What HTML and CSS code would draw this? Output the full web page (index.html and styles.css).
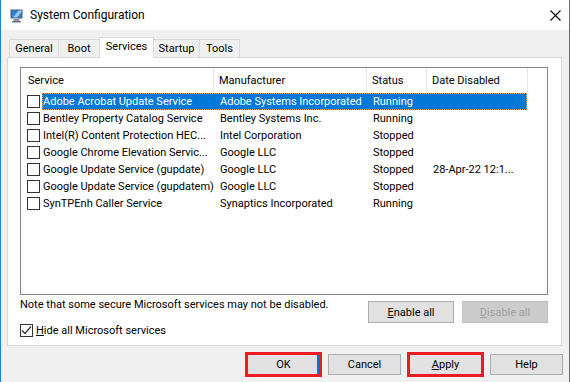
FILE: index.html
```html
<!DOCTYPE html>
<html lang="en">
<head>
  <meta charset="UTF-8">
  <title>System Configuration</title>
  <link rel="stylesheet" href="styles.css">
</head>
<body>
  <div class="window">
    <!-- Barra de titulo -->
    <div class="titlebar">
      <svg class="app-icon" width="13" height="14" viewBox="0 0 13 14">
        <rect x="0.5" y="0.5" width="12" height="9" fill="#4d5c6e" />
        <rect x="1.5" y="1.5" width="10" height="7" fill="#2f7fd6" />
        <path d="M3 8.5 L8.5 1.5 L11.5 1.5 L11.5 3 L7 8.5 Z" fill="#9ccbf5" />
        <path d="M4 10 L9 10 L10 12 L3 12 Z" fill="#8b96a3" />
        <rect x="2" y="12" width="9" height="1.5" fill="#6b7684" />
      </svg>
      <span class="title">System Configuration</span>
      <svg class="close" width="11" height="11" viewBox="0 0 11 11">
        <path d="M0.5 0.5 L10.5 10.5 M10.5 0.5 L0.5 10.5" stroke="#000" stroke-width="1.1" />
      </svg>
    </div>

    <div class="client">
      <!-- Abas -->
      <div class="tabs">
        <div class="tab tab-general">General</div>
        <div class="tab tab-boot">Boot</div>
        <div class="tab tab-services active">Services</div>
        <div class="tab tab-startup">Startup</div>
        <div class="tab tab-tools">Tools</div>
      </div>

      <div class="panel">
        <!-- Lista de servicos -->
        <div class="listview">
          <div class="lv-head">
            <div class="hcol h1">Service</div>
            <div class="hcol h2">Manufacturer</div>
            <div class="hcol h3">Status</div>
            <div class="hcol h4">Date Disabled</div>
          </div>

          <div class="lv-row selected">
            <span class="check"><span class="box"></span></span>
            <div class="cells">
              <span class="cell t1">Adobe Acrobat Update Service</span>
              <span class="cell t2">Adobe Systems Incorporated</span>
              <span class="cell t3">Running</span>
              <span class="cell t4"></span>
            </div>
          </div>
          <div class="lv-row">
            <span class="check"><span class="box"></span></span>
            <div class="cells">
              <span class="cell t1">Bentley Property Catalog Service</span>
              <span class="cell t2">Bentley Systems Inc.</span>
              <span class="cell t3">Running</span>
              <span class="cell t4"></span>
            </div>
          </div>
          <div class="lv-row">
            <span class="check"><span class="box"></span></span>
            <div class="cells">
              <span class="cell t1">Intel(R) Content Protection HEC...</span>
              <span class="cell t2">Intel Corporation</span>
              <span class="cell t3">Stopped</span>
              <span class="cell t4"></span>
            </div>
          </div>
          <div class="lv-row">
            <span class="check"><span class="box"></span></span>
            <div class="cells">
              <span class="cell t1">Google Chrome Elevation Servic...</span>
              <span class="cell t2">Google LLC</span>
              <span class="cell t3">Stopped</span>
              <span class="cell t4"></span>
            </div>
          </div>
          <div class="lv-row">
            <span class="check"><span class="box"></span></span>
            <div class="cells">
              <span class="cell t1">Google Update Service (gupdate)</span>
              <span class="cell t2">Google LLC</span>
              <span class="cell t3">Stopped</span>
              <span class="cell t4">28-Apr-22 12:1...</span>
            </div>
          </div>
          <div class="lv-row">
            <span class="check"><span class="box"></span></span>
            <div class="cells">
              <span class="cell t1">Google Update Service (gupdatem)</span>
              <span class="cell t2">Google LLC</span>
              <span class="cell t3">Stopped</span>
              <span class="cell t4"></span>
            </div>
          </div>
          <div class="lv-row">
            <span class="check"><span class="box"></span></span>
            <div class="cells">
              <span class="cell t1">SynTPEnh Caller Service</span>
              <span class="cell t2">Synaptics Incorporated</span>
              <span class="cell t3">Running</span>
              <span class="cell t4"></span>
            </div>
          </div>
        </div>

        <div class="note-row">
          <span class="note">Note that some secure Microsoft services may not be disabled.</span>
          <div class="btn btn-wide"><u>E</u>nable all</div>
          <div class="btn btn-wide disabled"><u>D</u>isable all</div>
        </div>

        <div class="hide-ms">
          <span class="box checked">
            <svg width="11" height="11" viewBox="0 0 11 11">
              <path d="M1 5.5 L4 8.5 L10 1.5" fill="none" stroke="#333" stroke-width="1.2" />
            </svg>
          </span>
          <span><u>H</u>ide all Microsoft services</span>
        </div>
      </div>

      <!-- Botoes do rodape -->
      <div class="footer">
        <div class="btn btn-ok marked">OK</div>
        <div class="btn">Cancel</div>
        <div class="btn marked"><u>A</u>pply</div>
        <div class="btn">Help</div>
      </div>
    </div>
  </div>
</body>
</html>
```

FILE: styles.css
```css
/* Base */
body {
  margin: 0;
  padding: 0;
  width: 571px;
  height: 382px;
  overflow: hidden;
  background: #fff;
  font-family: Roboto, "Liberation Sans", Arial, sans-serif;
  font-size: 11px;
  color: #000;
}

.window {
  width: 570px;
  height: 382px;
  box-sizing: border-box;
  border-left: 1px solid #1883d7;
  border-right: 1px solid #1883d7;
  display: flex;
  flex-direction: column;
}

/* Barra de titulo */
.titlebar {
  height: 30px;
  flex-shrink: 0;
  background: #fff;
  display: flex;
  align-items: center;
  padding-left: 9px;
}

.app-icon {
  margin-top: 1px;
}

.title {
  margin-left: 7px;
  font-size: 12px;
}

.close {
  margin-left: auto;
  margin-right: 8px;
}

/* Area cliente */
.client {
  flex: 1;
  background: #f0f0f0;
  padding: 7px 7px 0 6px;
}

/* Abas */
.tabs {
  height: 20px;
  display: flex;
  align-items: flex-end;
  padding-left: 2px;
}

.tab {
  height: 18px;
  box-sizing: border-box;
  border: 1px solid #d9d9d9;
  border-bottom: none;
  margin-right: -1px;
  background: #f0f0f0;
  display: flex;
  align-items: center;
  justify-content: center;
  line-height: 14px;
}

.tab-general { width: 50px; }
.tab-boot { width: 42px; }
.tab-services { width: 55px; }
.tab-startup { width: 47px; }
.tab-tools { width: 41px; }

.tab.active {
  height: 21px;
  margin-bottom: -1px;
  background: #fff;
  position: relative;
  z-index: 1;
  padding-bottom: 3px;
}

/* Painel */
.panel {
  height: 289px;
  box-sizing: border-box;
  background: #fff;
  border: 1px solid #d9d9d9;
  padding: 9px 13px 0 12px;
}

/* Lista */
.listview {
  height: 228px;
  box-sizing: border-box;
  border: 1px solid #828790;
  background: #fff;
}

.lv-head {
  height: 25px;
  display: flex;
}

.hcol {
  box-sizing: border-box;
  border-right: 1px solid #e5e5e5;
  padding-left: 5px;
  line-height: 25px;
  white-space: nowrap;
}

.h1 { width: 193px; padding-left: 7px; }
.h2 { width: 153px; }
.h3 { width: 60px; }
.h4 { width: 101px; }

.lv-row {
  height: 17px;
  display: flex;
}

.check {
  width: 21px;
  display: flex;
  align-items: center;
  padding-left: 6px;
  box-sizing: border-box;
}

.box {
  width: 13px;
  height: 13px;
  box-sizing: border-box;
  border: 1px solid #333;
  background: #fff;
  display: inline-flex;
  align-items: center;
  justify-content: center;
}

.cells {
  width: 485px;
  display: flex;
  line-height: 17px;
}

.cell {
  box-sizing: border-box;
  padding-left: 5px;
  white-space: nowrap;
  overflow: hidden;
}

.t1 { width: 172px; padding-left: 1px; margin-right: 1px; }
.t2 { width: 153px; }
.t3 { width: 60px; }
.t4 { width: 99px; }

.lv-row.selected .cells {
  background: #0078d7;
  color: #fff;
  outline: 1px dotted #f0a860;
  outline-offset: -1px;
}

/* Nota e botoes */
.note-row {
  display: flex;
  align-items: flex-start;
  margin-top: 3px;
  gap: 8px;
}

.note {
  flex: 1;
  line-height: 14px;
  white-space: nowrap;
}

.btn {
  width: 73px;
  height: 21px;
  box-sizing: border-box;
  background: #e1e1e1;
  border: 1px solid #adadad;
  display: flex;
  align-items: center;
  justify-content: center;
}

.btn-wide {
  width: 86px;
  height: 22px;
  margin-top: 3px;
}

.btn.disabled {
  background: #cccccc;
  border-color: #bfbfbf;
  color: #a0a0a0;
}

.hide-ms {
  display: flex;
  align-items: center;
  gap: 3px;
  margin-top: 1px;
  line-height: 13px;
}

/* Rodape */
.footer {
  display: flex;
  justify-content: flex-end;
  gap: 8px;
  margin-top: 8px;
  margin-right: -1px;
}

.btn-ok {
  box-shadow: inset -2px 0 0 #0078d7;
}

.btn.marked {
  outline: 3px solid #ed1c24;
  outline-offset: -1px;
}
```
